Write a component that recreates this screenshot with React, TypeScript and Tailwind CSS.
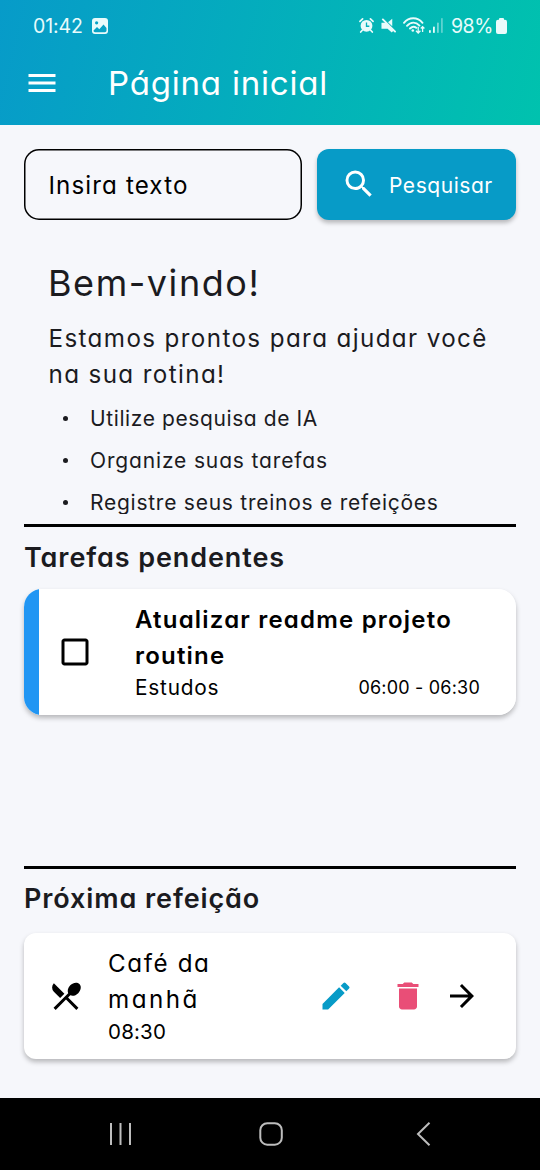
import type { ReactNode } from "react";
import {
  MdArrowForward,
  MdCheckBoxOutlineBlank,
  MdDelete,
  MdEdit,
  MdMenu,
  MdRestaurantMenu,
  MdSearch,
} from "react-icons/md";

function StatusBar() {
  return (
    <div className="flex h-[51px] items-center pr-[33px] pl-[33px] text-[#e9fbfb]">
      <span className="w-[58.5px] text-[19.5px] leading-6 tracking-[-0.1px] whitespace-nowrap">01:42</span>
      <svg className="h-4 w-4" viewBox="0 0 16 16">
        <rect width="16" height="16" rx="3" fill="currentColor" />
        <circle cx="4.6" cy="4.8" r="1.6" fill="#07a2c4" />
        <path d="M1.5 12.5 5 9l2.3 2.2L11.5 6.5 14.5 10v2.5c0 1-.8 1.7-1.7 1.7H3.2c-1 0-1.7-.7-1.7-1.7z" fill="#07a2c4" />
      </svg>
      <div className="ml-auto flex items-center">
        <svg className="h-[15px] w-[15px]" viewBox="0 0 16 16">
          <circle cx="8" cy="8.3" r="6.3" fill="currentColor" />
          <path d="M1 3.6 3.8 1M15 3.6 12.2 1M3.5 13 1.8 15M12.5 13l1.7 2" stroke="currentColor" strokeWidth="1.8" strokeLinecap="round" />
          <path d="M8 4.8v4h3" fill="none" stroke="#04b0bb" strokeWidth="1.4" />
        </svg>
        <svg className="ml-[7px] h-[15px] w-[15px]" viewBox="0 0 16 16">
          <path d="M.5 5h4.3L13.500 13.200 11.500 15.500 7 11.500H.5z" fill="currentColor" />
          <path d="M7.500 4.500 12 .8v8z" fill="currentColor" />
          <path d="M2 1.500 15 14.500" stroke="currentColor" strokeWidth="2" strokeLinecap="round" />
        </svg>
        <svg className="ml-[7px] h-[17px] w-[22px]" viewBox="0 0 22 17" fill="none" stroke="currentColor">
          <path d="M1 5.800C6-.2 14.500-.2 19.500 5.800M4 8.800c3.800-4.200 8.800-4.200 12.500-.2M7 11.500c2-2 4.500-2.200 6.200-.7" strokeWidth="1.900" strokeLinecap="round" />
          <circle cx="9.800" cy="13.500" r="1.300" fill="currentColor" stroke="none" />
          <path d="M15.200 9.800v6M13 13.800l2.200 2.200 2.200-2.200M19.600 15V9.800M17.800 11.500l1.800-1.900 1.800 1.900" strokeWidth="1.300" />
        </svg>
        <svg className="ml-[4px] h-[15px] w-[14px]" viewBox="0 0 14 15" fill="currentColor">
          <rect x="0" y="12" width="1.8" height="3" rx=".8" />
          <rect x="4" y="8.5" width="1.8" height="6.5" rx=".8" />
          <rect x="8" y="4.5" width="1.8" height="10.5" rx=".8" opacity=".5" />
          <rect x="12" y="0" width="1.8" height="15" rx=".8" opacity=".4" />
        </svg>
        <span className="ml-[8px] w-[45px] text-[19.5px] leading-6 tracking-[-0.5px] whitespace-nowrap">98%</span>
        <svg className="h-4 w-[11px]" viewBox="0 0 11 16" fill="currentColor">
          <rect x="3" width="5" height="4" rx="1" />
          <rect y="1.8" width="11" height="14.2" rx="2" />
        </svg>
      </div>
    </div>
  );
}

function Header() {
  return (
    <header className="h-[124.5px] shrink-0 bg-[linear-gradient(103deg,#079bc9,#00c2ae)] text-white">
      <StatusBar />
      <div className="flex h-[63px] items-center pl-6">
        <MdMenu className="h-9 w-9" />
        <h1 className="ml-[48px] text-[33px] leading-[48px] tracking-[0.8px] whitespace-nowrap">Página inicial</h1>
      </div>
    </header>
  );
}

function SearchRow() {
  return (
    <div className="flex h-[71.5px] gap-[15.5px]">
      <input
        className="w-[277.5px] rounded-[15px] pt-[3px] pl-[24.5px] text-[24.2px] tracking-[1.1px] text-black shadow-[inset_0_0_0_1.5px_#000] outline-none placeholder:text-black placeholder:opacity-100"
        placeholder="Insira texto"
      />
      <button className="flex flex-1 items-center rounded-xl bg-[#079bc7] pl-[23.5px] text-white shadow-[0_3px_4px_rgba(0,0,0,0.25)]">
        <MdSearch className="h-9 w-9" />
        <span className="ml-[12.5px] pt-[2px] text-[21px] tracking-[0.55px]">Pesquisar</span>
      </button>
    </div>
  );
}

function Bullet({ children }: { children: ReactNode }) {
  return (
    <li className="flex h-[42px] shrink-0 items-center">
      <span className="ml-[15px] h-[5px] w-[5px] rounded-full bg-[#1b1b1f]" />
      <span className="ml-[22px] whitespace-nowrap">{children}</span>
    </li>
  );
}

function Welcome() {
  return (
    <section className="flex h-[294px] flex-col overflow-hidden pt-[38.5px] pl-6 text-[#1b1b1f]">
      <h2 className="h-12 shrink-0 text-[36px] leading-[48px] font-[370] tracking-[1.55px]">Bem-vindo!</h2>
      <p className="mt-[14px] shrink-0 pl-[0.5px] text-[24.2px] leading-9 font-[380] tracking-[1.38px] whitespace-nowrap">
        Estamos prontos para ajudar você
        <br />
        na sua rotina!
      </p>
      <ul className="mt-[5px] flex flex-col text-[21px] font-[380]">
        <Bullet>
          <span className="tracking-[0.6px]">Utilize pesquisa de IA</span>
        </Bullet>
        <Bullet>
          <span className="tracking-[0.85px]">Organize suas tarefas</span>
        </Bullet>
        <Bullet>
          <span className="tracking-[0.75px]">Registre seus treinos e refeições</span>
        </Bullet>
      </ul>
    </section>
  );
}

function TaskCard() {
  return (
    <article className="flex h-[126px] overflow-hidden rounded-[18px] bg-white text-black">
      <div className="w-[15px] bg-[#2196f3]" />
      <div className="flex w-[72px] items-center justify-center">
        <MdCheckBoxOutlineBlank className="h-9 w-9" />
      </div>
      <div className="flex flex-1 flex-col pt-[13px] pr-[36px] pl-6">
        <h3 className="text-[24px] leading-9 font-semibold tracking-[1.2px] whitespace-nowrap">
          Atualizar readme projeto
          <br />
          routine
        </h3>
        <div className="-mt-px flex items-center justify-between leading-[30px] font-[370]">
          <span className="text-[20.8px] tracking-[0.8px]">Estudos</span>
          <time className="text-[18px] tracking-[0.2px]">06:00 - 06:30</time>
        </div>
      </div>
    </article>
  );
}

function MealCard() {
  return (
    <article className="flex h-[126px] items-center rounded-xl bg-white pl-6 text-black shadow-[0_3px_5px_rgba(0,0,0,0.26)]">
      <MdRestaurantMenu className="h-9 w-9" />
      <div className="ml-[24px] w-[186px]">
        <h3 className="pt-px text-[24.2px] leading-9 tracking-[1.6px]">
          Café da
          <br />
          <span className="tracking-[2.5px]">manhã</span>
        </h3>
        <time className="-mt-px block text-[20.5px] leading-[30px] font-[370] tracking-[0.2px]">08:30</time>
      </div>
      <button className="ml-[24px]">
        <MdEdit className="h-9 w-9 text-[#079bc7]" />
      </button>
      <button className="ml-9">
        <MdDelete className="h-9 w-9 text-[#e94e77]" />
      </button>
      <MdArrowForward className="ml-[18px] h-9 w-9" />
    </article>
  );
}

function SectionTitle({ children }: { children: ReactNode }) {
  return (
    <h2 className="h-[42px] text-[27px] leading-[42px] font-[570] tracking-[0.9px] text-[#1b1b1f]">{children}</h2>
  );
}

function NavigationBar() {
  return (
    <nav className="flex h-[72px] shrink-0 items-center justify-between bg-black px-[108px] pb-px text-[#bdbdbd]">
      <svg className="h-6 w-6" viewBox="0 0 24 24" stroke="currentColor" strokeWidth="2">
        <path d="M3 1v22M12.5 1v22M22 1v22" />
      </svg>
      <svg className="mr-[6px] h-6 w-6" viewBox="0 0 24 24" fill="none" stroke="currentColor" strokeWidth="2">
        <rect x="1.3" y="1.2" width="21.5" height="21.5" rx="7" />
      </svg>
      <svg className="h-6 w-4" viewBox="0 0 16 24" fill="none" stroke="currentColor" strokeWidth="2">
        <path d="M13.5 .8 2 12l11.5 11.2" />
      </svg>
    </nav>
  );
}

export default function App() {
  return (
    <div className="flex h-[1170px] w-[540px] flex-col overflow-hidden bg-[#f6f7fb] font-['Inter',sans-serif] [font-feature-settings:'cv11']">
      <Header />
      <main className="flex flex-1 flex-col px-6 pt-[24px]">
        <SearchRow />
        <Welcome />
        <hr className="mt-[10px] h-[3px] shrink-0 border-0 bg-black" />
        <div className="h-[338.5px] pt-[10px]">
          <SectionTitle>Tarefas pendentes</SectionTitle>
          <div className="mt-[10px] rounded-[18px] shadow-[0_3px_5px_rgba(0,0,0,0.26)]">
            <TaskCard />
          </div>
        </div>
        <hr className="h-[3px] shrink-0 border-0 bg-black" />
        <div className="pt-[9px]">
          <SectionTitle>Próxima refeição</SectionTitle>
          <div className="mt-[13.5px]">
            <MealCard />
          </div>
        </div>
      </main>
      <NavigationBar />
    </div>
  );
}
